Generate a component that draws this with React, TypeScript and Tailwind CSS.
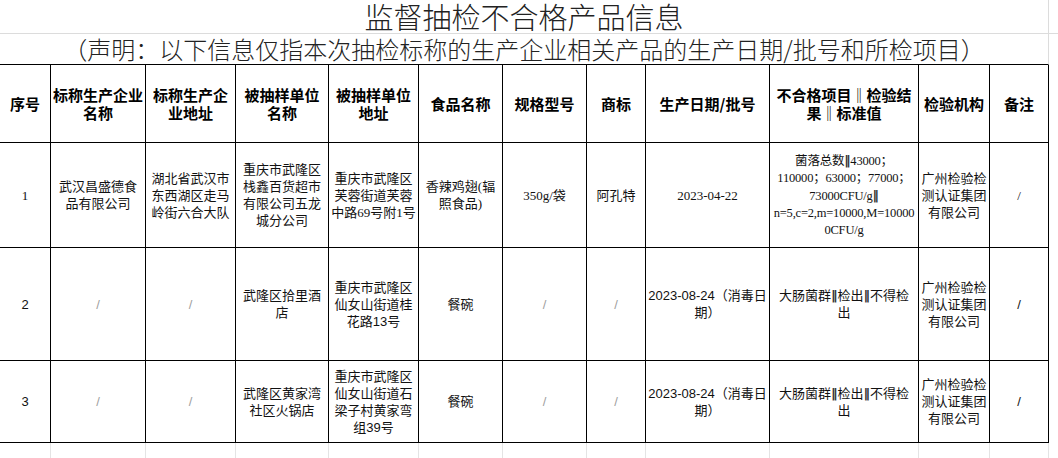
import React from "react";

type Cell = { text: string; muted?: boolean };

const GRID =
  "grid grid-cols-[51px_95px_90px_93px_90px_84px_84px_59px_124px_149px_71px_59px_9px]";

const headers = [
  "序号",
  "标称生产企业\n名称",
  "标称生产企\n业地址",
  "被抽样单位\n名称",
  "被抽样单位\n地址",
  "食品名称",
  "规格型号",
  "商标",
  "生产日期/批号",
  "不合格项目‖检验结\n果‖标准值",
  "检验机构",
  "备注",
];

const slash: Cell = { text: "/", muted: true };
const lab = "广州检验检\n测认证集团\n有限公司";

const rows: { height: string; font: string; cells: Cell[] }[] = [
  {
    height: "h-[105px]",
    font: "font-['Liberation_Serif','Noto_Sans_CJK_SC',serif]",
    cells: [
      { text: "1" },
      { text: "武汉昌盛德食\n品有限公司" },
      { text: "湖北省武汉市\n东西湖区走马\n岭街六合大队" },
      { text: "重庆市武隆区\n栈鑫百货超市\n有限公司五龙\n城分公司" },
      { text: "重庆市武隆区\n芙蓉街道芙蓉\n中路69号附1号" },
      { text: "香辣鸡翅(辐\n照食品)" },
      { text: "350g/袋" },
      { text: "阿孔特" },
      { text: "2023-04-22" },
      {
        text: "菌落总数‖43000；\n110000；63000；77000；\n73000CFU/g‖\nn=5,c=2,m=10000,M=10000\n0CFU/g",
      },
      { text: lab },
      { text: "/" },
    ],
  },
  {
    height: "h-[113px]",
    font: "font-['Liberation_Sans','Noto_Sans_CJK_SC',sans-serif]",
    cells: [
      { text: "2" },
      slash,
      slash,
      { text: "武隆区拾里酒\n店" },
      { text: "重庆市武隆区\n仙女山街道桂\n花路13号" },
      { text: "餐碗" },
      slash,
      slash,
      { text: "2023-08-24（消毒日\n期）" },
      { text: "大肠菌群‖检出‖不得检\n出" },
      { text: lab },
      { text: "/" },
    ],
  },
  {
    height: "h-[82px]",
    font: "font-['Liberation_Sans','Noto_Sans_CJK_SC',sans-serif]",
    cells: [
      { text: "3" },
      slash,
      slash,
      { text: "武隆区黄家湾\n社区火锅店" },
      { text: "重庆市武隆区\n仙女山街道石\n梁子村黄家弯\n组39号" },
      { text: "餐碗" },
      slash,
      slash,
      { text: "2023-08-24（消毒日\n期）" },
      { text: "大肠菌群‖检出‖不得检\n出" },
      { text: lab },
      { text: "/" },
    ],
  },
];

// narrow double bar, like the sheet's own glyph
const withBars = (text: string) =>
  text.split("‖").map((part, i) => (
    <React.Fragment key={i}>
      {i > 0 && <span className="font-['DejaVu_Sans',sans-serif] font-bold text-[#333]">‖</span>}
      {part}
    </React.Fragment>
  ));

export default function App() {
  return (
    <div className="w-[1058px] h-[458px] overflow-hidden bg-white text-black font-['Noto_Sans_CJK_SC',sans-serif]">
      {/* title */}
      <div className={`${GRID} h-[34px]`}>
        <div className="col-span-12 flex items-center justify-center border-r border-b border-[#dcdcdc] text-[29px] leading-[33px] font-light text-[#222]">
          监督抽检不合格产品信息
        </div>
        <div className="border-b border-[#dcdcdc]" />
      </div>

      {/* statement */}
      <div className={`${GRID} h-[31px]`}>
        <div className="col-span-12 flex items-center justify-center border-r border-b border-r-[#dcdcdc] border-b-black text-[24px] leading-[30px] font-light text-[#222]">
          （声明：以下信息仅指本次抽检标称的生产企业相关产品的生产日期/批号和所检项目）
        </div>
        <div />
      </div>

      {/* header */}
      <div className={`${GRID} h-[78px]`}>
        {headers.map((h, i) => (
          <div
            key={i}
            className="flex items-center justify-center border-r border-b border-black text-center whitespace-pre text-[15px] leading-[18px] font-bold"
          >
            {h}
          </div>
        ))}
        <div />
      </div>

      {rows.map((row, r) => (
        <div key={r} className={`${GRID} ${row.height}`}>
          {row.cells.map((c, i) => (
            <div
              key={i}
              className={`flex items-center justify-center border-r border-b border-black text-center whitespace-pre leading-[17px] ${row.font} ${
                c.muted ? "text-[#a0a0a0]" : "text-[#111]"
              } ${i === 9 && r === 0 ? "text-[12.5px] tracking-[-0.2px]" : "text-[13px]"}`}
            >
              <span>{withBars(c.text)}</span>
            </div>
          ))}
          <div />
        </div>
      ))}

      {/* empty sheet area */}
      <div className={`${GRID} h-[20px]`}>
        {headers.map((_, i) => (
          <div key={i} className="border-r border-[#e4e4e4]" />
        ))}
        <div />
      </div>
    </div>
  );
}
